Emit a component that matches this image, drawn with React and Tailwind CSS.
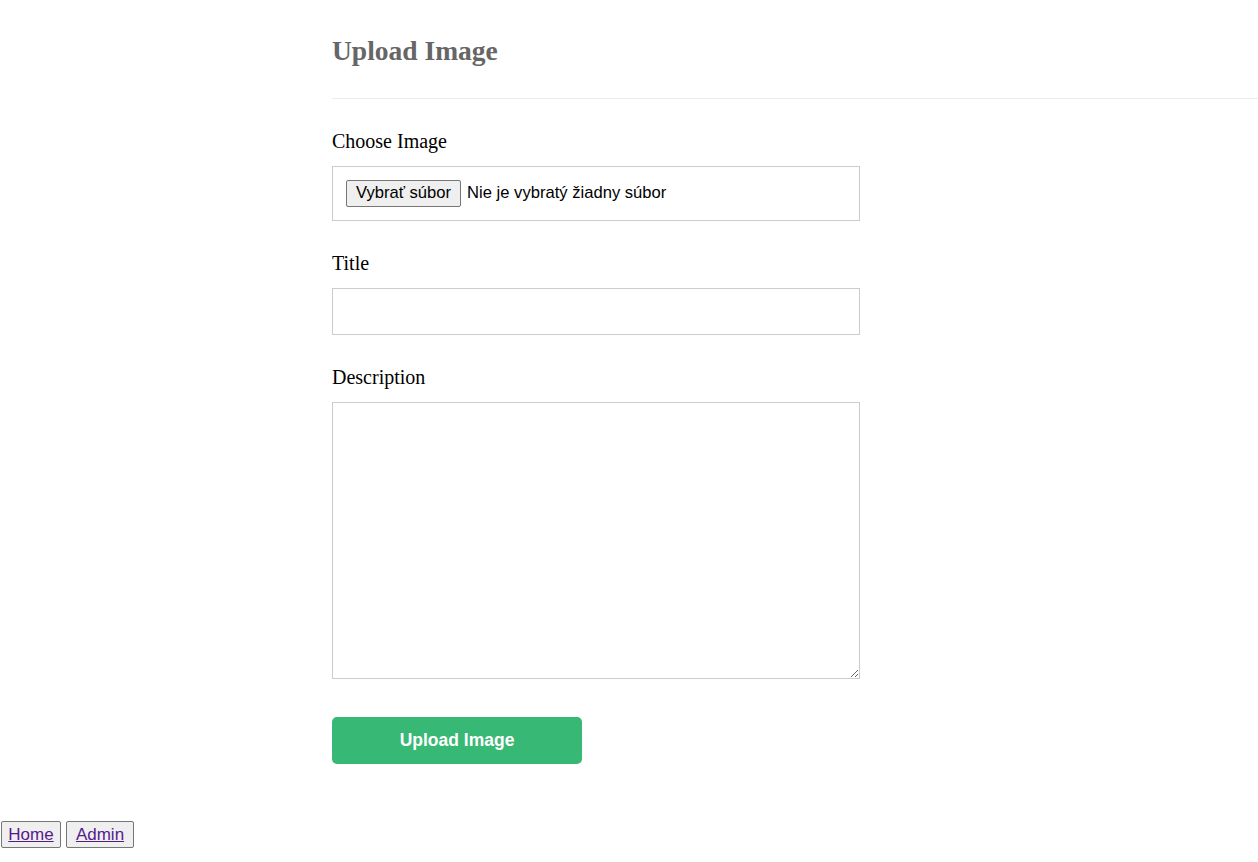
export default function App() {
  return (
    <div className="min-h-screen bg-white" style={{ fontFamily: '"Liberation Serif", serif' }}>
      <div className="ml-[332px]">
        {/* Header */}
        <div className="pt-[30px] pb-[26px] border-b border-[#ebebeb]">
          <h1 className="text-[27.5px] leading-[42px] font-bold text-[#666666]">Upload Image</h1>
        </div>

        <form className="w-[528px] pt-[31px]" onSubmit={(e) => e.preventDefault()}>
          <div className="mb-[31px]">
            <label className="block text-[20px] leading-[22px] text-black mb-[14px]">Choose Image</label>
            <div className="h-[55px] border border-[#cccccc] px-[13px] flex items-center gap-[6px] font-['Liberation_Sans',Arial,sans-serif] text-[16.6px] text-black">
              <button
                type="button"
                className="h-[27px] px-[9px] bg-[#efefef] border border-[#767676] rounded-[2px] text-[16.6px] leading-none"
              >
                Vybrať súbor
              </button>
              <span>Nie je vybratý žiadny súbor</span>
            </div>
          </div>

          <div className="mb-[31px]">
            <label className="block text-[20px] leading-[22px] text-black mb-[14px]">Title</label>
            <input type="text" className="block w-full h-[47px] border border-[#cccccc] px-[12px] outline-none" />
          </div>

          <div className="mb-[38px]">
            <label className="block text-[20px] leading-[22px] text-black mb-[14px]">Description</label>
            <textarea className="block w-full h-[277px] border border-[#cccccc] p-[12px] outline-none resize-y" />
          </div>

          <button
            type="submit"
            className="w-[250px] h-[47px] rounded-[5px] bg-[#37b874] text-white text-[17.5px] font-bold font-['Liberation_Sans',Arial,sans-serif]"
          >
            Upload Image
          </button>
        </form>
      </div>

      {/* Bottom nav */}
      <div className="mt-[57px] ml-[1px] flex gap-[5px] font-['Liberation_Sans',Arial,sans-serif]">
        <button className="w-[60px] h-[27px] bg-[#efefef] border border-[#767676] rounded-[2px]">
          <a href="#" className="text-[17px] text-[#551a8b] underline">Home</a>
        </button>
        <button className="w-[68px] h-[27px] bg-[#efefef] border border-[#767676] rounded-[2px]">
          <a href="#" className="text-[17px] text-[#551a8b] underline">Admin</a>
        </button>
      </div>
    </div>
  );
}
